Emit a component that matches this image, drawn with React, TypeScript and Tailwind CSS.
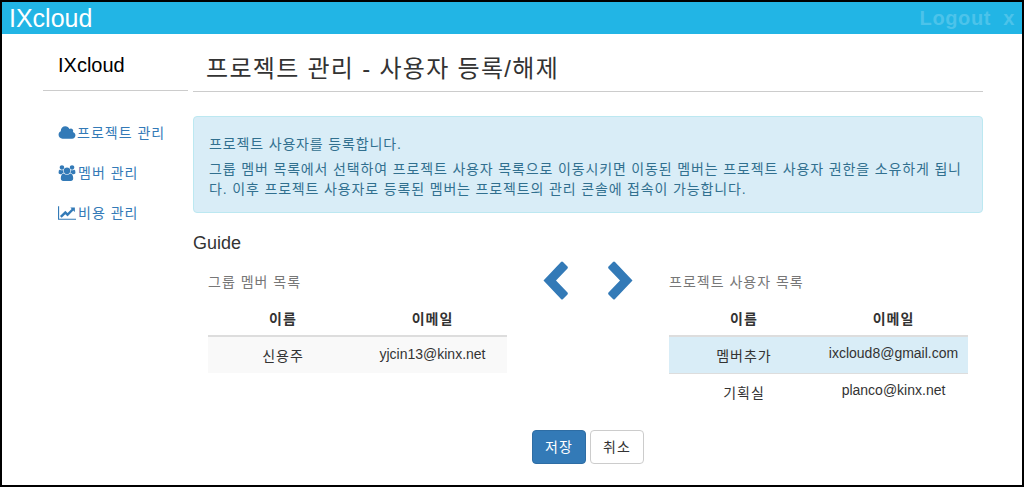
const ko = "[font-family:'Liberation_Sans','Noto_Sans_CJK_KR',sans-serif]";

function CloudIcon() {
    return (
        <svg width="18" height="16" viewBox="0 0 2048 1792" fill="currentColor" className="-mr-[1px]">
            <path d="M1984 1152q0 159-112.5 271.5t-271.5 112.5h-1088q-185 0-316.5-131.5t-131.5-316.5q0-132 71-241.5t187-163.5q-2-28-2-43 0-212 150-362t362-150q158 0 286.5 88t187.5 230q70-62 166-62 106 0 181 75t75 181q0 75-41 138 129 30 213 134.5t84 239.5z" />
        </svg>
    );
}

function UsersIcon() {
    return (
        <svg width="18" height="16" viewBox="0 0 2048 1792" fill="currentColor">
            <path d="M657 896q-162 5-265 128h-134q-82 0-138-40.5t-56-118.5q0-353 124-353 6 0 43.5 21t97.5 42.5 119 21.5q67 0 133-23-5 37-5 66 0 139 81 256zm1071 637q0 120-73 189.5t-194 69.5h-874q-121 0-194-69.5t-73-189.5q0-53 3.5-103.5t14-109 26.5-108.5 43-97.5 62-81 85.5-53.5 111.5-20q10 0 43 21.5t73 48 107 48 135 21.5 135-21.5 107-48 73-48 43-21.5q61 0 111.5 20t85.5 53.5 62 81 43 97.5 26.5 108.5 14 109 3.5 103.5zm-1024-1277q0 106-75 181t-181 75-181-75-75-181 75-181 181-75 181 75 75 181zm704 384q0 159-112.5 271.5t-271.5 112.5-271.5-112.5-112.5-271.5 112.5-271.5 271.5-112.5 271.5 112.5 112.5 271.5zm576 225q0 78-56 118.5t-138 40.5h-134q-103-123-265-128 81-117 81-256 0-29-5-66 66 23 133 23 59 0 119-21.5t97.5-42.5 43.5-21q124 0 124 353zm-128-609q0 106-75 181t-181 75-181-75-75-181 75-181 181-75 181 75 75 181z" />
        </svg>
    );
}

function ChartIcon() {
    return (
        <svg width="18" height="16" viewBox="0 0 2048 1792" fill="currentColor">
            <path d="M2048 1536v128h-2048v-1536h128v1408h1920zm-128-1248v435q0 21-19.5 29.5t-35.5-7.5l-121-121-633 633q-10 10-23 10t-23-10l-233-233-416 416-192-192 585-585q10-10 23-10t23 10l233 233 464-464-121-121q-16-16-7.5-35.5t29.5-19.5h435q14 0 23 9t9 23z" />
        </svg>
    );
}

function Chevron({ dir }: { dir: "left" | "right" }) {
    return (
        <svg width="25" height="39" viewBox="0 0 25 39" className={dir === "right" ? "scale-x-[-1]" : ""}>
            <path d="M0.5 19.5 L18 1 Q19 0 20 1 L24.5 5.5 Q25.2 6.5 24.5 7.5 L13 19.5 L24.5 31.5 Q25.2 32.5 24.5 33.5 L20 38 Q19 39 18 38 Z" fill="#337ab7" />
        </svg>
    );
}

function MemberTable({ rows }: { rows: { name: string; email: string; bg?: string }[] }) {
    return (
        <table className="w-[299px] table-fixed border-collapse text-[14px] text-[#333]">
            <thead>
                <tr className="h-[38px] border-b-2 border-[#ddd]">
                    <th className="w-[150px] pt-[6px] font-bold tracking-[1px]">이름</th>
                    <th className="pt-[6px] font-bold tracking-[1px]">이메일</th>
                </tr>
            </thead>
            <tbody>
                {rows.map((r) => (
                    <tr key={r.email} className={`h-[37px] ${r.bg ?? ""}`}>
                        <td className="pt-[3px] text-center tracking-[1px]">{r.name}</td>
                        <td className="pb-[2px] text-center">{r.email}</td>
                    </tr>
                ))}
            </tbody>
        </table>
    );
}

export default function App() {
    const menu = [
        { label: "프로젝트 관리", icon: <CloudIcon /> },
        { label: "멤버 관리", icon: <UsersIcon /> },
        { label: "비용 관리", icon: <ChartIcon /> },
    ];

    return (
        <div className={`${ko} h-[487px] w-[1024px] overflow-hidden border-2 border-black bg-white text-[14px] text-[#333]`}>
            <header className="flex h-[32px] items-center justify-between bg-[#22b5e5] pl-[7px] pr-[7px]">
                <span className="text-[25px] leading-[28px] text-white">IXcloud</span>
                <span className="text-[20px] font-bold tracking-[0.6px] text-[#4cc3ea]">Logout&nbsp; x</span>
            </header>

            <div className="flex pl-[41px]">
                <aside className="w-[145px]">
                    <div className="h-[57px] border-b border-[#ccc] pl-[15px] pt-[17px] text-[20px] leading-[28px] text-black">IXcloud</div>
                    <ul className="mt-[22px] pl-[15px] text-[#337ab7]">
                        {menu.map((m) => (
                            <li key={m.label} className="flex h-[40px] items-center gap-[2px] tracking-[1px]">
                                {m.icon}
                                <span>{m.label}</span>
                            </li>
                        ))}
                    </ul>
                </aside>

                <main className="ml-[5px] w-[790px]">
                    <h1 className="h-[58px] border-b border-[#ccc] pl-[13px] pt-[17px] text-[24px] leading-[36px] tracking-[1.3px] text-[#333]">프로젝트 관리 - 사용자 등록/해제</h1>

                    <div className="mt-[24px] h-[97px] rounded-[4px] border border-[#bce8f1] bg-[#d9edf7] px-[15px] pt-[15px] text-[#31708f] tracking-[0.85px]">
                        <p className="leading-[24px]">프로젝트 사용자를 등록합니다.</p>
                        <p className="mt-[3px] leading-[20px]">그룹 멤버 목록에서 선택하여 프로젝트 사용자 목록으로 이동시키면 이동된 멤버는 프로젝트 사용자 권한을 소유하게 됩니다. 이후 프로젝트 사용자로 등록된 멤버는 프로젝트의 관리 콘솔에 접속이 가능합니다.</p>
                    </div>

                    <h2 className="mt-[18px] text-[18px] leading-[24px] text-[#333]">Guide</h2>

                    <div className="mt-[16px] flex items-start pl-[15px]">
                        <section className="w-[299px]">
                            <p className="h-[27px] pt-[1px] text-[#777] tracking-[1px]">그룹 멤버 목록</p>
                            <MemberTable rows={[{ name: "신용주", email: "yjcin13@kinx.net", bg: "bg-[#f9f9f9]" }]} />
                        </section>

                        <div className="ml-[36px] -mt-[10px] flex w-[90px] justify-between">
                            <Chevron dir="left" />
                            <Chevron dir="right" />
                        </div>

                        <section className="ml-[36px] w-[299px]">
                            <p className="h-[27px] pt-[1px] text-[#777] tracking-[1px]">프로젝트 사용자 목록</p>
                            <MemberTable
                                rows={[
                                    { name: "멤버추가", email: "ixcloud8@gmail.com", bg: "bg-[#d9edf7] border-b border-[#ddd]" },
                                    { name: "기획실", email: "planco@kinx.net" },
                                ]}
                            />
                        </section>
                    </div>

                    <div className="mt-[20px] flex justify-center gap-[4px]">
                        <button className="h-[34px] w-[54px] rounded-[4px] border border-[#2e6da4] bg-[#337ab7] text-white tracking-[1px]">저장</button>
                        <button className="h-[34px] w-[54px] rounded-[4px] border border-[#ccc] bg-white text-[#333] tracking-[1px]">취소</button>
                    </div>
                </main>
            </div>
        </div>
    );
}
